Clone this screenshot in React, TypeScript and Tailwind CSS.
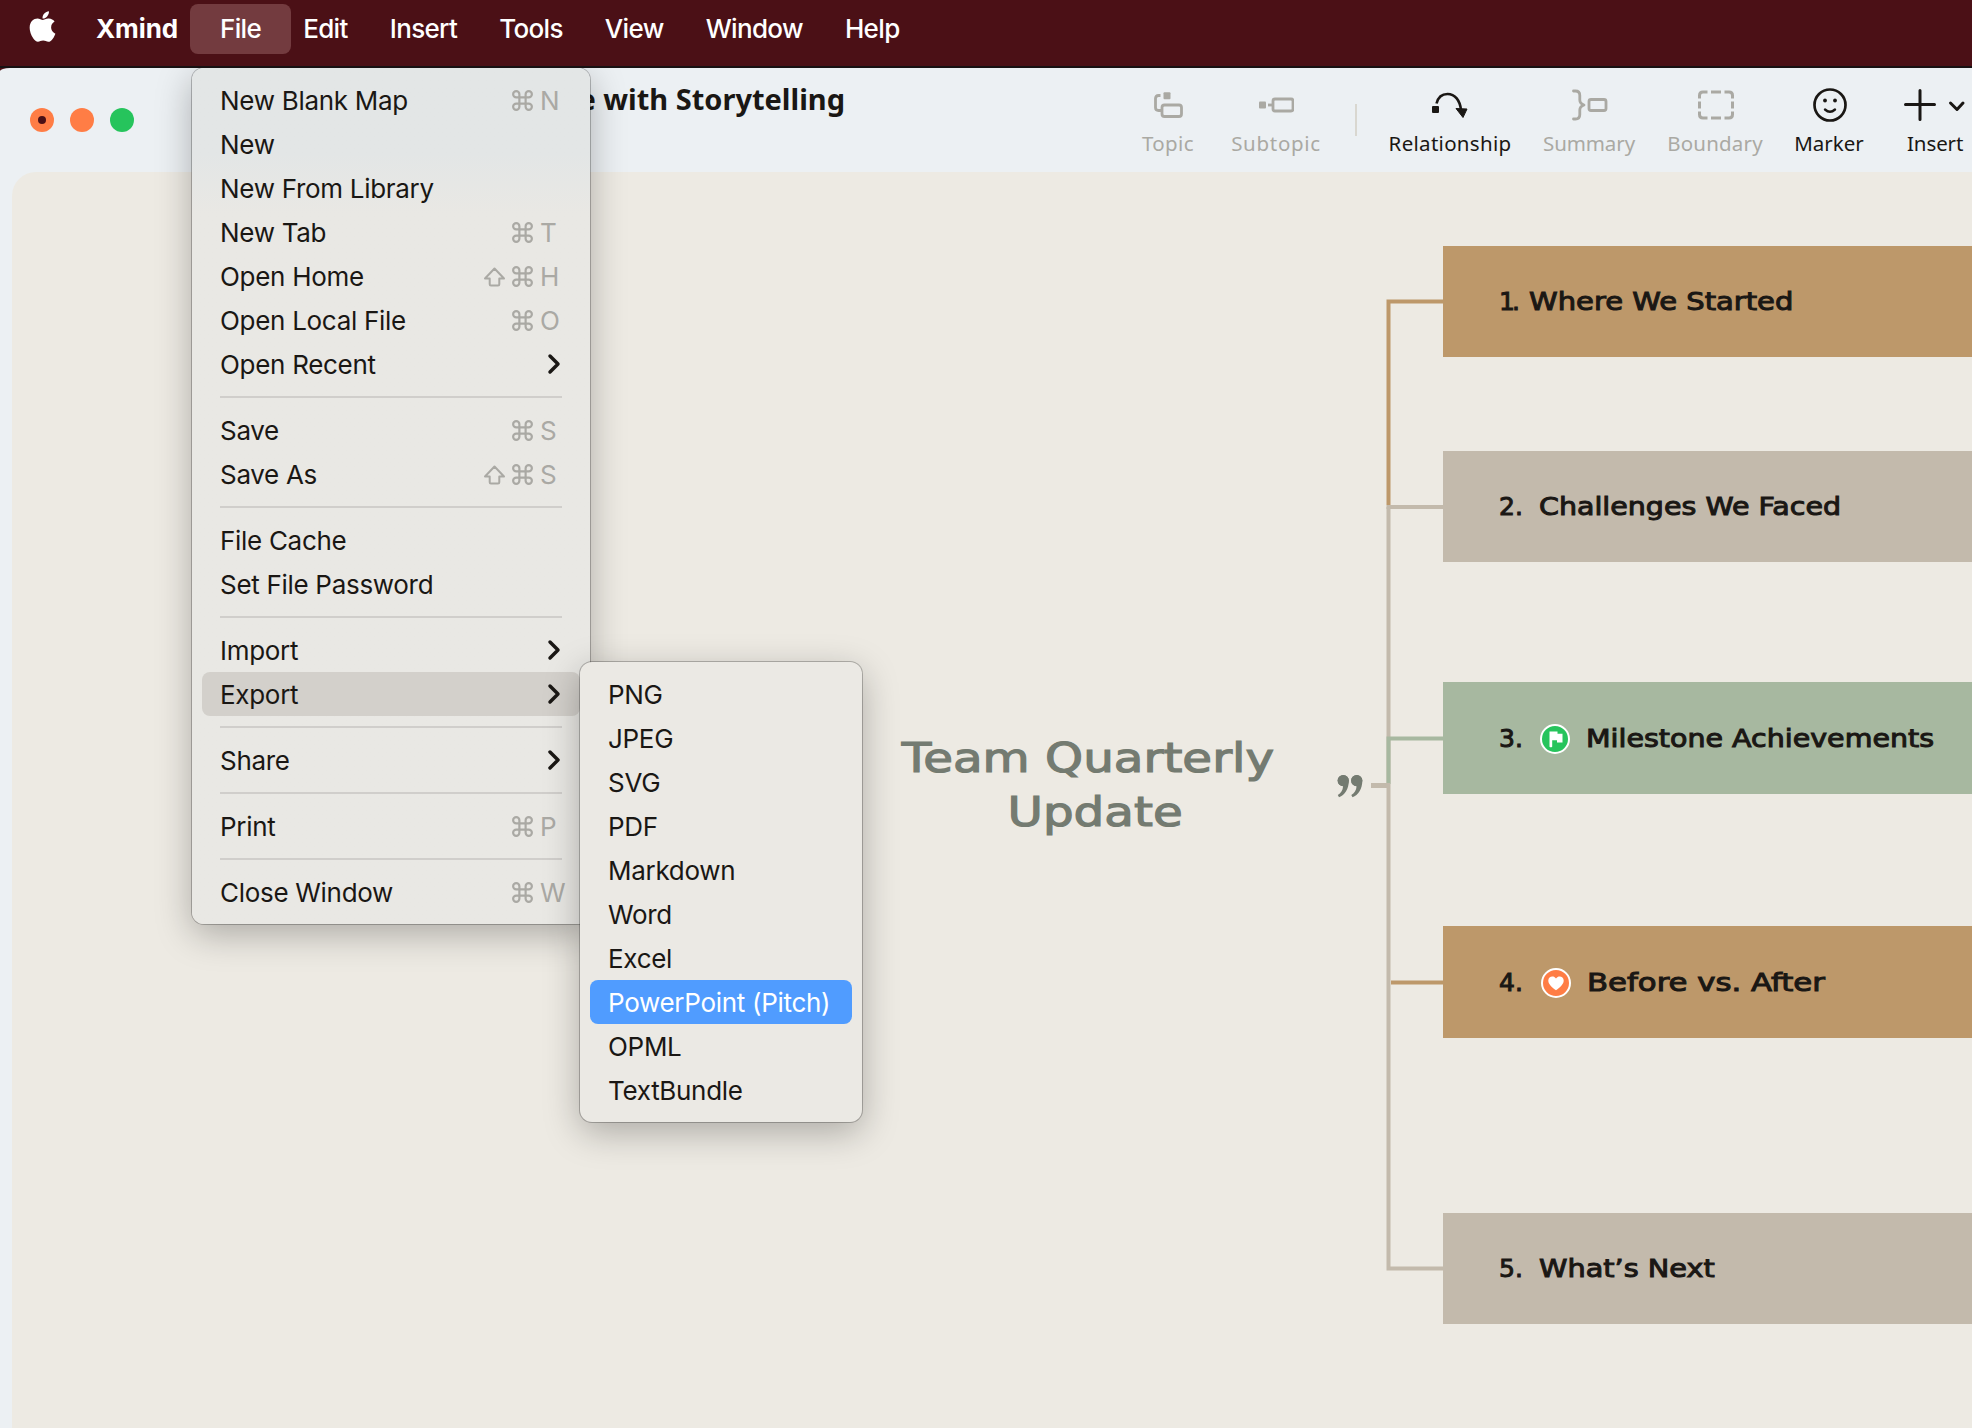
import { Fragment, type ReactNode } from "react";
import { ChevronRight, Command } from "lucide-react";
import { FaApple } from "react-icons/fa";

type MenuEntry = {
  label: string;
  keys?: string;
  shift?: boolean;
  submenu?: boolean;
  active?: boolean;
};

const menuBar = ["File", "Edit", "Insert", "Tools", "View", "Window", "Help"];

const fileMenu: MenuEntry[][] = [
  [
    { label: "New Blank Map", keys: "N" },
    { label: "New" },
    { label: "New From Library" },
    { label: "New Tab", keys: "T" },
    { label: "Open Home", keys: "H", shift: true },
    { label: "Open Local File", keys: "O" },
    { label: "Open Recent", submenu: true },
  ],
  [
    { label: "Save", keys: "S" },
    { label: "Save As", keys: "S", shift: true },
  ],
  [{ label: "File Cache" }, { label: "Set File Password" }],
  [
    { label: "Import", submenu: true },
    { label: "Export", submenu: true, active: true },
  ],
  [{ label: "Share", submenu: true }],
  [{ label: "Print", keys: "P" }],
  [{ label: "Close Window", keys: "W" }],
];

const exportMenu = [
  "PNG",
  "JPEG",
  "SVG",
  "PDF",
  "Markdown",
  "Word",
  "Excel",
  "PowerPoint (Pitch)",
  "OPML",
  "TextBundle",
];

const FlagMarker = () => (
  <svg width="30" height="30" viewBox="0 0 30 30" className="mr-4 shrink-0">
    <circle cx="15" cy="15" r="14" fill="#26c45c" stroke="#fff" strokeWidth="2" />
    <path d="M9.5 7.5h8v2.2h5v8.8h-5.5v-2.2h-4.8v6.4q-1.3 1-2.7 0z" fill="#fff" />
  </svg>
);

const HeartMarker = () => (
  <svg width="30" height="30" viewBox="0 0 30 30" className="ml-px mr-4 shrink-0">
    <circle cx="15" cy="15" r="14" fill="#ff7d45" stroke="#fff" strokeWidth="2" />
    <path d="M15 22.3C10 18.6 7.3 15.8 7.3 12.5C7.3 8.3 12.8 7 15 10.6C17.2 7 22.7 8.3 22.7 12.5C22.7 15.8 20 18.6 15 22.3Z" fill="#fff" />
  </svg>
);

const topics = [
  { no: "1.", title: "Where We Started", box: "top-[74px] h-[111px] bg-[#bd986a]", noBox: "w-[30px] tracking-[-3px]", stretch: "scale-x-[1.16]" },
  { no: "2.", title: "Challenges We Faced", box: "top-[279px] h-[111px] bg-[#c3baac]", noBox: "w-[40px]", stretch: "scale-x-[1.14]" },
  { no: "3.", title: "Milestone Achievements", box: "top-[510px] h-[112px] bg-[#a7b8a0]", noBox: "w-[41px]", stretch: "scale-x-[1.14]", marker: <FlagMarker /> },
  { no: "4.", title: "Before vs. After", box: "top-[754px] h-[112px] bg-[#bd986a]", noBox: "w-[41px]", stretch: "scale-x-[1.23]", marker: <HeartMarker /> },
  { no: "5.", title: "What’s Next", box: "top-[1041px] h-[111px] bg-[#c3baac]", noBox: "w-[40px]", stretch: "scale-x-[1.15]" },
];

const ShiftKey = () => (
  <svg width="23" height="20" viewBox="0 0 22 20" fill="none" stroke="currentColor" strokeWidth="2" strokeLinejoin="round">
    <path d="M11 1.5L20.5 11.5H15.8V17.2Q15.8 18.5 14.5 18.5H7.5Q6.2 18.5 6.2 17.2V11.5H1.5Z" />
  </svg>
);

const MenuRow = ({ entry }: { entry: MenuEntry }) => (
  <li className={`mx-[10px] flex h-11 items-center rounded-lg pl-[18px] ${entry.active ? "bg-[#d3d0cb]" : ""}`}>
    <span className="flex-1 pt-0.5 leading-[44px]">{entry.label}</span>
    {entry.keys && (
      <span className="flex items-center pt-px text-[#aaa9a4]">
        {entry.shift && <ShiftKey />}
        <Command size={25} strokeWidth={2.1} className="ml-1" />
        <span className="ml-[5px] w-10 leading-[44px]">{entry.keys}</span>
      </span>
    )}
    {entry.submenu && <ChevronRight size={32} strokeWidth={2.6} className="mr-[10px]" />}
  </li>
);

const ToolItem = ({ label, className, muted, icon }: { label: string; className: string; muted?: boolean; icon: ReactNode }) => (
  <div className={`flex flex-col items-center ${className} ${muted ? "text-[#aaa9a3]" : "text-[#1a1714]"}`}>
    <div className="flex h-8 items-center">{icon}</div>
    <span className="mt-2 text-[20.5px] leading-7">{label}</span>
  </div>
);

const Toolbar = () => (
  <div className="ml-auto flex gap-8 whitespace-nowrap pr-[5px] pt-[21px] font-['Noto_Sans',sans-serif]">
    <ToolItem
      label="Topic"
      className="w-[62px] tracking-[0.4px]"
      muted
      icon={
        <svg width="30" height="32" viewBox="0 0 30 32" fill="none" stroke="currentColor" strokeWidth="2.8">
          <path d="M7.5 6.5H5.5Q2.5 6.5 2.5 9.5V18.5Q2.5 21.5 5.5 21.5H8.5" />
          <rect x="9" y="16" width="19.5" height="11.5" rx="2.5" />
          <rect x="10.5" y="3.3" width="7" height="7" rx="1" fill="currentColor" stroke="none" />
        </svg>
      }
    />
    <ToolItem
      label="Subtopic"
      className="w-[90px] tracking-[0.7px]"
      muted
      icon={
        <svg width="36" height="32" viewBox="-0.5 0 36 32" fill="none" stroke="currentColor" strokeWidth="2.8">
          <rect x="0.5" y="12.5" width="7" height="7" rx="1" fill="currentColor" stroke="none" />
          <path d="M9.5 16h5" />
          <rect x="14.5" y="10" width="20" height="12" rx="2" />
        </svg>
      }
    />
    <div className="mt-[15px] h-8 w-1 border-r-2 border-[#d9d7d0]" />
    <ToolItem
      label="Relationship"
      className="w-[122px] tracking-[0.3px]"
      icon={
        <svg width="36" height="32" viewBox="0 0 36 32" fill="none" stroke="currentColor" strokeWidth="2.6">
          <path d="M4.5 14.5C6 8.5 10 5 15.5 5C23 5 28 11.5 29 21" />
          <rect x="0" y="17" width="7" height="7" rx="1" fill="currentColor" stroke="none" />
          <path d="M24 19.5L35 20L31 28.5Z" fill="currentColor" strokeWidth="1" strokeLinejoin="round" />
        </svg>
      }
    />
    <ToolItem
      label="Summary"
      className="w-[92px] tracking-[-0.1px]"
      muted
      icon={
        <svg width="36" height="32" viewBox="0 0 36 32" fill="none" stroke="currentColor" strokeWidth="2.8" strokeLinejoin="round" className="ml-0.5">
          <path d="M1.5 2H3.5Q7.8 2 7.8 6.5V11Q7.8 14.5 12 16Q7.8 17.5 7.8 21V25.5Q7.8 30 3.5 30H1.5" strokeLinecap="round" />
          <rect x="17" y="10.5" width="17" height="11" rx="2" />
        </svg>
      }
    />
    <ToolItem
      label="Boundary"
      className="w-[96px] tracking-[0.2px]"
      muted
      icon={
        <svg width="36" height="32" viewBox="0 0 36 32" fill="none" stroke="currentColor" strokeWidth="3" className="ml-0.5">
          <path d="M1.5 9.5V6.5Q1.5 3 5 3H9.5M13 3H23M26.5 3H31Q34.5 3 34.5 6.5V9.5M34.5 12.5V19.5M34.5 22.5V25.5Q34.5 29 31 29H26.5M23 29H13M9.5 29H5Q1.5 29 1.5 25.5V22.5M1.5 19.5V12.5" />
        </svg>
      }
    />
    <ToolItem
      label="Marker"
      className="w-[68px]"
      icon={
        <svg width="34" height="34" viewBox="0 0 34 34" fill="none" stroke="currentColor" strokeWidth="2.7" strokeLinecap="round" className="ml-0.5">
          <circle cx="17" cy="17" r="15.5" />
          <circle cx="12" cy="12.5" r="1.9" fill="currentColor" stroke="none" />
          <circle cx="22" cy="12.5" r="1.9" fill="currentColor" stroke="none" />
          <path d="M12 21.5Q17 26 22 21.5" strokeWidth="2.4" />
        </svg>
      }
    />
    <div className="flex w-[72px] flex-col text-[#1a1714]">
      <svg width="72" height="32" viewBox="0 0 72 32" fill="none" stroke="currentColor" strokeWidth="3" strokeLinecap="round" strokeLinejoin="round">
        <path d="M10.500 15.5H39.5M25 1.5V30.5M55.5 14L62 20.5L68 14" />
      </svg>
      <span className="mt-2 pl-[12px] text-[20.5px] leading-7 tracking-[-0.1px]">Insert</span>
    </div>
  </div>
);

const MindMap = () => (
  <main className="relative ml-3 flex-1 overflow-hidden rounded-tl-[24px] bg-[#edeae3]">
    <svg className="absolute left-0 top-0" width="1960" height="1256" fill="none" strokeWidth="4">
      <path d="M1376.5 335V1096.5H1431" stroke="#c3baac" />
      <path d="M1376.5 333V129.5H1431" stroke="#bd986a" />
      <path d="M1374.5 335H1431" stroke="#c3baac" />
      <path d="M1376.5 612V566.5H1431" stroke="#a7b8a0" />
      <path d="M1379 810.5H1431" stroke="#bd986a" />
      <path d="M1359 613.5H1378" stroke="#c3baac" strokeWidth="5" />
      <g fill="#747b71">
        <path d="M1331.3 603a5.5 5.5 0 0 1 5.5 5.7c0 8-4 14.5-9.8 16.5l-1.2-2.2c3-1.7 5-4.5 5.3-8.7a5.6 5.6 0 0 1 .2-11.3z" />
        <path d="M1344.8 603a5.5 5.5 0 0 1 5.5 5.7c0 8-4 14.5-9.8 16.5l-1.2-2.2c3-1.7 5-4.5 5.3-8.7a5.6 5.6 0 0 1 .2-11.3z" />
        <circle cx="1331.3" cy="608.6" r="5.6" />
        <circle cx="1344.8" cy="608.6" r="5.6" />
      </g>
    </svg>

    <h1 className="absolute left-[876px] top-[559px] w-[400px] scale-x-[1.18] text-center font-['DejaVu_Sans',sans-serif] text-[41px] leading-[54px] text-[#747b71] [-webkit-text-stroke:1.2px_#747b71]">
      Team Quarterly
      <br />
      <span className="pl-3">Update</span>
    </h1>

    {topics.map((topic) => (
      <section
        key={topic.no}
        className={`absolute left-[1431px] flex w-[540px] items-center whitespace-nowrap pl-14 pt-px font-['DejaVu_Sans',sans-serif] text-[25px] text-[#1a1714] [-webkit-text-stroke:1px_#1a1714] ${topic.box}`}
      >
        <span className={topic.noBox}>{topic.no}</span>
        {topic.marker}
        <span className={`origin-left ${topic.stretch}`}>{topic.title}</span>
      </section>
    ))}
  </main>
);

const FileMenu = () => (
  <ul className="absolute left-[192px] top-[68px] w-[398px] rounded-xl bg-linear-to-b from-[#e3e6e6] from-10% to-[#e9e8e4] to-17% py-[10px] shadow-[0_0_0_1px_rgba(0,0,0,0.24),0_10px_36px_rgba(0,0,0,0.28)]">
    {fileMenu.map((group, i) => (
      <Fragment key={group[0].label}>
        {i > 0 && <li className="mx-[28px] my-[10px] h-0.5 bg-[#d0cecb]" />}
        {group.map((entry) => (
          <MenuRow key={entry.label} entry={entry} />
        ))}
      </Fragment>
    ))}
  </ul>
);

const ExportMenu = () => (
  <ul className="absolute left-[580px] top-[662px] w-[282px] rounded-xl bg-[#ebe9e4] py-[10px] shadow-[0_0_0_1px_rgba(0,0,0,0.24),0_10px_36px_rgba(0,0,0,0.28)]">
    {exportMenu.map((label) => (
      <li
        key={label}
        className={`mx-[10px] h-11 rounded-lg pl-[18px] leading-[46px] ${label.startsWith("PowerPoint") ? "bg-[#509cff] text-white" : ""}`}
      >
        {label}
      </li>
    ))}
  </ul>
);

export default function App() {
  return (
    <div className="relative flex h-[1428px] w-[1972px] flex-col overflow-hidden bg-[#4b1016] font-['Inter',sans-serif] text-[26px] text-[#1a1714]">
      <nav className="relative z-10 flex h-[68px] shrink-0 gap-[42px] border-b-2 border-[#181113] bg-[#4b1016] pl-[25px] pt-1 font-medium tracking-[-0.65px] text-white">
        <FaApple size={35} className="-mr-[6px] mt-[5px]" />
        <span className="font-bold leading-[50px] tracking-[-0.1px]">Xmind</span>
        {menuBar.map((item) => (
          <span
            key={item}
            className={`h-[50px] leading-[50px] ${item === "File" ? "-mx-[30px] rounded-lg bg-[#733b3f] px-[30px]" : ""}`}
          >
            {item}
          </span>
        ))}
      </nav>

      <div className="flex flex-1 flex-col rounded-tl-[10px_3px] bg-[#ecf0f3]">
        <header className="flex h-[104px] shrink-0">
          <div className="flex items-center gap-4 pl-[30px]">
            <span className="flex size-6 items-center justify-center rounded-full bg-[#ff7d45]">
              <span className="size-2 rounded-full bg-[#4b1016]" />
            </span>
            <span className="size-6 rounded-full bg-[#ff7d45]" />
            <span className="size-6 rounded-full bg-[#26c45c]" />
          </div>
          <h2 className="mt-[11px] w-[711px] text-right font-['Noto_Sans',sans-serif] text-[29px] font-bold leading-10">
            e with Storytelling
          </h2>
          <Toolbar />
        </header>
        <MindMap />
      </div>

      <div className="tracking-[-0.3px]">
        <FileMenu />
        <ExportMenu />
      </div>
    </div>
  );
}
